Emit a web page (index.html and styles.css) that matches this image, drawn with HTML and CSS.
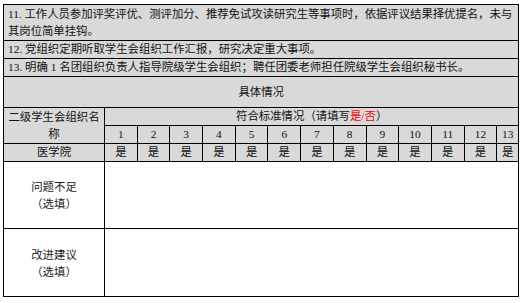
FILE: index.html
```html
<!DOCTYPE html>
<html lang="zh">
<head>
<meta charset="utf-8">
<link rel="stylesheet" href="styles.css">
</head>
<body>
<table class="sheet">
  <colgroup>
    <col class="c-name">
    <col class="c-n"><col class="c-n"><col class="c-n"><col class="c-n">
    <col class="c-n"><col class="c-n"><col class="c-n"><col class="c-n">
    <col class="c-n"><col class="c-n"><col class="c-n"><col class="c-n">
    <col class="c-last">
  </colgroup>
  <tr class="r-two">
    <td colspan="14" class="left wide">11. 工作人员参加评奖评优、测评加分、推荐免试攻读研究生等事项时，依据评议结果择优提名，未与<br>其岗位简单挂钩。</td>
  </tr>
  <tr class="r-one">
    <td colspan="14" class="left">12. 党组织定期听取学生会组织工作汇报，研究决定重大事项。</td>
  </tr>
  <tr class="r-one">
    <td colspan="14" class="left">13. 明确 1 名团组织负责人指导院级学生会组织；聘任团委老师担任院级学生会组织秘书长。</td>
  </tr>
  <tr class="r-title">
    <td colspan="14">具体情况</td>
  </tr>
  <tr class="r-one">
    <td rowspan="2" class="name">二级学生会组织名<br>称</td>
    <td colspan="13">符合标准情况（请填写<span class="red">是/否</span>）</td>
  </tr>
  <tr class="r-one">
    <td>1</td><td>2</td><td>3</td><td>4</td><td>5</td><td>6</td><td>7</td>
    <td>8</td><td>9</td><td>10</td><td>11</td><td>12</td><td>13</td>
  </tr>
  <tr class="r-one">
    <td>医学院</td>
    <td>是</td><td>是</td><td>是</td><td>是</td><td>是</td><td>是</td><td>是</td>
    <td>是</td><td>是</td><td>是</td><td>是</td><td>是</td><td>是</td>
  </tr>
  <tr class="r-big white">
    <td>问题不足<br>（选填）</td>
    <td colspan="13"></td>
  </tr>
  <tr class="r-big2 white">
    <td>改进建议<br>（选填）</td>
    <td colspan="13"></td>
  </tr>
</table>
</body>
</html>
```
FILE: styles.css
```css
html, body {
  margin: 0;
  padding: 0;
  background: #ffffff;
}
body {
  padding: 4px 0 0 3px;
}
.sheet {
  border-collapse: collapse;
  table-layout: fixed;
  width: 516px;
  font-family: "Liberation Serif", "Noto Sans CJK SC", serif;
  font-size: 11.4px;
  line-height: 17px;
  color: #111;
  background: #d9d9d9;
}
.c-name { width: 101px; }
.c-n { width: 32.7px; }
.c-last { width: 22px; }
.sheet td {
  border: 1px solid #000;
  padding: 0;
  text-align: center;
  vertical-align: middle;
  white-space: nowrap;
  overflow: hidden;
}
.sheet td.left {
  text-align: left;
  padding-left: 4px;
}
.sheet td.wide {
  letter-spacing: -0.05px;
}
.r-two td { height: 35px; }
.r-one td { height: 17px; }
.r-title td { height: 30px; }
.r-big td { height: 66px; }
.r-big2 td { height: 67px; }
.white td {
  background: #ffffff;
  font-family: "Noto Sans CJK SC", sans-serif;
  color: #222;
}
.red { color: #ff0000; }
```
